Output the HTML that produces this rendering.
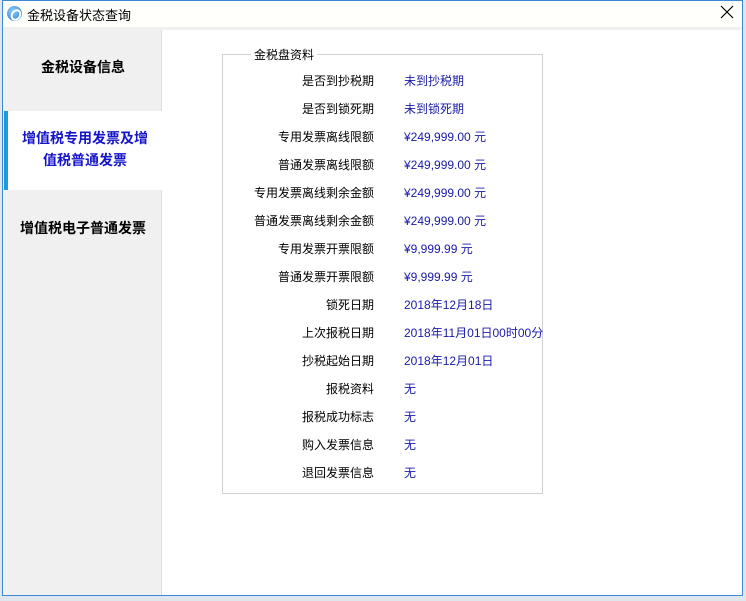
<!DOCTYPE html>
<html><head><meta charset="utf-8"><style>
*{margin:0;padding:0;box-sizing:border-box}
body{width:746px;height:601px;background:#dfe6ee;position:relative;overflow:hidden;font-family:"Liberation Sans","Noto Sans CJK SC","WenQuanYi Zen Hei",sans-serif;}
.win{position:absolute;left:2px;top:0;width:741px;height:596px;border:1px solid #3c8ad6;background:#f0f0f0}
.title{position:absolute;left:0;top:0;width:739px;height:26px;background:#fffffb;font-size:13px;color:#000}
.title span{position:absolute;left:24px;top:4px}
.icon{position:absolute;left:4px;top:5px;width:15px;height:15px;border-radius:50%;background:radial-gradient(circle at 40% 35%,#8fd0ff,#1a72c8);}
.icon:after{content:"";position:absolute;left:4px;top:3px;width:6px;height:8px;border:2px solid #fff;border-radius:50%;transform:rotate(35deg)}
.close{position:absolute;right:8px;top:4px;width:14px;height:14px}
.side{position:absolute;left:1px;top:29px;width:158px;height:565px;background:#f0f0f0;border-right:1px solid #dcdcdc}
.tab{position:absolute;left:0;width:158px;text-align:center;font-weight:bold;font-size:14px;color:#000}
.sel{background:#fff;color:#1414c8;border-left:4px solid #1e9be0;line-height:22px}
.content{position:absolute;left:159px;top:29px;width:580px;height:565px;background:#fff}
.gb{position:absolute;left:60px;top:24px;width:321px;height:440px;border:1px solid #d0d0d0}
.gbt{position:absolute;left:28px;top:-9px;background:#fff;padding:0 3px;font-size:12px}
.row{position:absolute;left:0;font-size:12px;height:16px;width:321px}
.row .l{position:absolute;right:170px;color:#000;white-space:nowrap}
.row .v{position:absolute;left:181px;color:#1a1aa6;white-space:nowrap}
</style></head><body>
<div class="win">
<div class="title"><div class="icon"></div><span>金税设备状态查询</span><svg class="close" viewBox="0 0 14 14"><path d="M1 1L13 13M13 1L1 13" stroke="#000" stroke-width="1.2"/></svg></div>
<div class="side">
<div class="tab" style="top:27px">金税设备信息</div>
<div class="tab sel" style="top:81px;height:79px;padding-top:16px">增值税专用发票及增<br>值税普通发票</div>
<div class="tab" style="top:188px">增值税电子普通发票</div>
</div>
<div class="content">
<div class="gb"><div class="gbt">金税盘资料</div>
<div class="row" style="top:17px"><span class="l">是否到抄税期</span><span class="v">未到抄税期</span></div>
<div class="row" style="top:45px"><span class="l">是否到锁死期</span><span class="v">未到锁死期</span></div>
<div class="row" style="top:73px"><span class="l">专用发票离线限额</span><span class="v">¥249,999.00 元</span></div>
<div class="row" style="top:101px"><span class="l">普通发票离线限额</span><span class="v">¥249,999.00 元</span></div>
<div class="row" style="top:129px"><span class="l">专用发票离线剩余金额</span><span class="v">¥249,999.00 元</span></div>
<div class="row" style="top:157px"><span class="l">普通发票离线剩余金额</span><span class="v">¥249,999.00 元</span></div>
<div class="row" style="top:185px"><span class="l">专用发票开票限额</span><span class="v">¥9,999.99 元</span></div>
<div class="row" style="top:213px"><span class="l">普通发票开票限额</span><span class="v">¥9,999.99 元</span></div>
<div class="row" style="top:241px"><span class="l">锁死日期</span><span class="v">2018年12月18日</span></div>
<div class="row" style="top:269px"><span class="l">上次报税日期</span><span class="v">2018年11月01日00时00分</span></div>
<div class="row" style="top:297px"><span class="l">抄税起始日期</span><span class="v">2018年12月01日</span></div>
<div class="row" style="top:325px"><span class="l">报税资料</span><span class="v">无</span></div>
<div class="row" style="top:353px"><span class="l">报税成功标志</span><span class="v">无</span></div>
<div class="row" style="top:381px"><span class="l">购入发票信息</span><span class="v">无</span></div>
<div class="row" style="top:409px"><span class="l">退回发票信息</span><span class="v">无</span></div>
</div>
</div>
</div>
</body></html>
